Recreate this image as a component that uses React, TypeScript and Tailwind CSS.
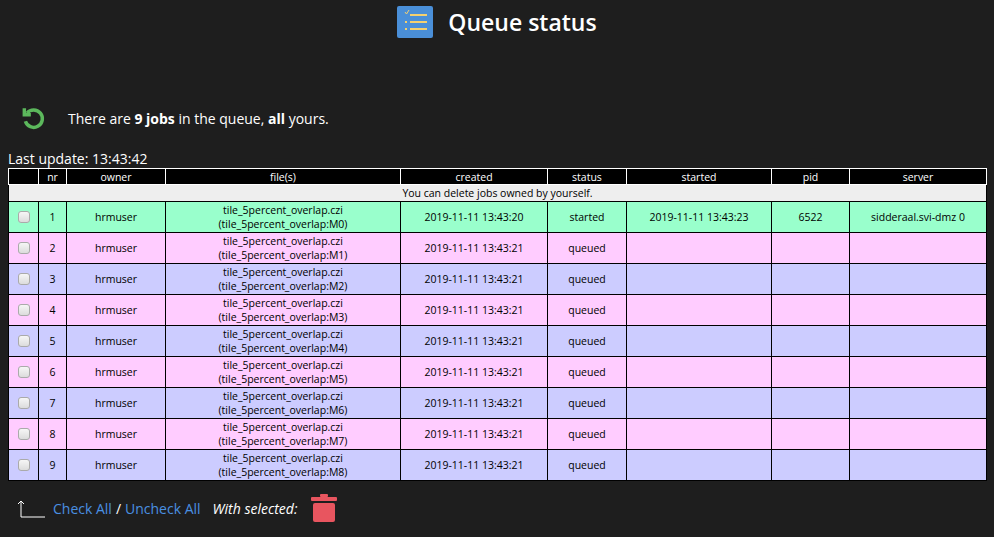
import React from "react";

const rows = Array.from({ length: 9 }, (_, i) => i);

export default function App() {
  return (
    <div className="w-[994px] h-[537px] bg-[#1e1e1e] text-white overflow-hidden" style={{ fontFamily: '"Open Sans", sans-serif' }}>
      <div className="flex items-center justify-center gap-[15px] pt-[4px] h-[40px]">
        <svg width="36" height="32" viewBox="0 0 36 32">
          <rect x="0" y="0" width="36" height="32" rx="2" fill="#4a8fd8" />
          <path d="M8 6l1.5 2 2.5-4" stroke="#f4d06f" strokeWidth="1" fill="none" />
          <rect x="8" y="15" width="2" height="2" fill="#f4d06f" />
          <rect x="8" y="22" width="2" height="2" fill="#f4d06f" />
          <rect x="13" y="8" width="17" height="2" fill="#f4d06f" />
          <rect x="13" y="15" width="17" height="2" fill="#f4d06f" />
          <rect x="13" y="22" width="17" height="2" fill="#f4d06f" />
        </svg>
        <span className="text-[23px] font-semibold">Queue status</span>
      </div>
      <div className="flex items-center mt-[64px] pl-[20px] h-[28px]">
        <svg width="26" height="26" viewBox="0 0 24 24" fill="none" stroke="#5cb85c" strokeWidth="3.2" strokeLinecap="butt">
          <path d="M6.5 7.5A8 8 0 1 1 5 15" />
          <path d="M4 3v6h6" strokeLinejoin="miter" />
        </svg>
        <span className="ml-[22px] text-[14px]">There are <b>9 jobs</b> in the queue, <b>all</b> yours.</span>
      </div>
      <div className="pl-[8px] mt-[18px] text-[14px] leading-[18px]">Last update: 13:43:42</div>
      <table className="ml-[8px] w-[979px] border-collapse text-[10.5px] text-center leading-[14px]">
        <thead>
          <tr className="bg-black text-white h-[16px]">
            {[["", 30], ["nr", 28], ["owner", 99], ["file(s)", 235], ["created", 147], ["status", 79], ["started", 145], ["pid", 78], ["server", 137]].map(([t, w]) => (
              <th key={t as string} style={{ width: w as number }} className="border border-white font-normal p-0">{t}</th>
            ))}
          </tr>
        </thead>
        <tbody className="text-black">
          <tr className="bg-[#eeeeee] h-[17px]">
            <td colSpan={9} className="border border-black p-0">You can delete jobs owned by yourself.</td>
          </tr>
          {rows.map((i) => {
            const bg = i === 0 ? "bg-[#99ffcc]" : i % 2 ? "bg-[#ffccff]" : "bg-[#ccccff]";
            return (
              <tr key={i} className={`${bg} h-[31px]`}>
                <td className="border border-black p-0">
                  <div className="mx-auto w-[12px] h-[12px] rounded-[3px] border border-[#aaa] bg-gradient-to-b from-[#f6f6f6] to-[#dcdcdc]" />
                </td>
                <td className="border border-black p-0">{i + 1}</td>
                <td className="border border-black p-0">hrmuser</td>
                <td className="border border-black p-0">tile_5percent_overlap.czi<br />(tile_5percent_overlap:M{i})</td>
                <td className="border border-black p-0">2019-11-11 13:43:{i === 0 ? "20" : "21"}</td>
                <td className="border border-black p-0">{i === 0 ? "started" : "queued"}</td>
                <td className="border border-black p-0">{i === 0 ? "2019-11-11 13:43:23" : ""}</td>
                <td className="border border-black p-0">{i === 0 ? "6522" : ""}</td>
                <td className="border border-black p-0">{i === 0 ? "sidderaal.svi-dmz 0" : ""}</td>
              </tr>
            );
          })}
        </tbody>
      </table>
      <div className="flex items-center mt-[13px] pl-[16px] text-[14px]">
        <svg width="30" height="20" viewBox="0 0 30 20" fill="none" stroke="white" strokeWidth="1">
          <path d="M5 19V3M2 6l3-3 3 3M5 19h24" />
        </svg>
        <span className="ml-[7px] text-[#4a90e2]">Check All</span>
        <span className="mx-[4px]">/</span>
        <span className="text-[#4a90e2]">Uncheck All</span>
        <span className="ml-[12px] italic">With selected:</span>
        <svg className="ml-[14px]" width="26" height="28" viewBox="0 0 26 28">
          <rect x="9" y="0" width="8" height="3" rx="1" fill="#e8555f" />
          <rect x="0" y="3" width="26" height="4" rx="1" fill="#e8555f" />
          <rect x="2" y="9" width="22" height="19" rx="2" fill="#e8555f" />
        </svg>
      </div>
    </div>
  );
}
